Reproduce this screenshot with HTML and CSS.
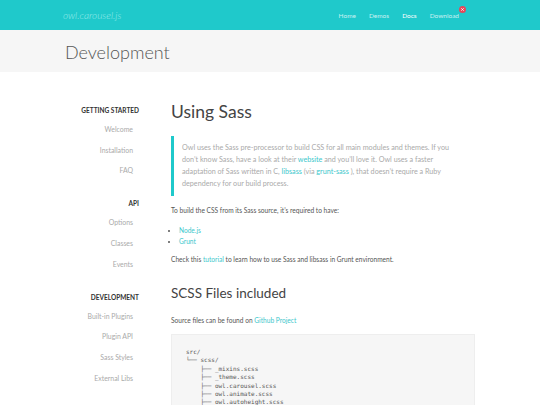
FILE: index.html
```html
<!DOCTYPE html>
<html>
<head>
<meta charset="utf-8">
<link rel="stylesheet" href="styles.css">
</head>
<body>
<header class="topbar">
  <div class="wrap topbar-inner">
    <a class="logo">owl.carousel.js</a>
    <nav class="nav">
      <a>Home</a>
      <a>Demos</a>
      <a class="active">Docs</a>
      <a class="dl">Download<span class="badge"><svg viewBox="0 0 10 10" width="7" height="7"><circle cx="5" cy="5" r="5" fill="#e64759"/><path d="M3.3 3.3 L6.7 6.7 M6.7 3.3 L3.3 6.7" stroke="#fff" stroke-width="1.2"/></svg></span></a>
    </nav>
  </div>
</header>
<section class="titlebar">
  <div class="wrap"><h1>Development</h1></div>
</section>
<div class="wrap layout">
  <aside class="side">
    <h4>GETTING STARTED</h4>
    <ul>
      <li>Welcome</li>
      <li>Installation</li>
      <li>FAQ</li>
    </ul>
    <h4>API</h4>
    <ul>
      <li>Options</li>
      <li>Classes</li>
      <li>Events</li>
    </ul>
    <h4>DEVELOPMENT</h4>
    <ul>
      <li>Built-in Plugins</li>
      <li>Plugin API</li>
      <li>Sass Styles</li>
      <li>External Libs</li>
    </ul>
  </aside>
  <main class="main">
    <h2>Using Sass</h2>
    <blockquote>Owl uses the Sass pre-processor to build CSS for all main modules and themes. If you don’t know Sass, have a look at their <a>website</a> and you’ll love it. Owl uses a faster adaptation of Sass written in C, <a>libsass</a> (via <a>grunt-sass</a> ), that doesn’t require a Ruby dependency for our build process.</blockquote>
    <p class="p1">To build the CSS from its Sass source, it’s required to have:</p>
    <ul class="bul">
      <li><a>Node.js</a></li>
      <li><a>Grunt</a></li>
    </ul>
    <p class="p2">Check this <a>tutorial</a> to learn how to use Sass and libsass in Grunt environment.</p>
    <h3>SCSS Files included</h3>
    <p class="p3">Source files can be found on <a>Github Project</a></p>
    <pre class="code">src/
└── scss/
    ├── _mixins.scss
    ├── _theme.scss
    ├── owl.carousel.scss
    ├── owl.animate.scss
    ├── owl.autoheight.scss</pre>
  </main>
</div>
</body>
</html>
```
FILE: styles.css
```css
html, body { margin: 0; padding: 0; }
body {
  font-family: Lato, "Open Sans", sans-serif;
  color: #444;
  background: #fff;
  overflow: hidden;
  height: 405px;
}
a { color: #3dc7cc; text-decoration: none; }
.wrap { margin-left: 63px; width: 412px; }
.topbar { background: #1fc9cb; height: 30px; }
.topbar-inner { display: flex; align-items: center; justify-content: space-between; height: 30px; }
.logo { color: #9ae9ea; font-style: italic; font-weight: 300; font-size: 10px; }
.nav { display: flex; gap: 13px; font-size: 6.5px; padding-right: 16px; }
.nav a { color: #c9f1f2; }
.nav a.active { color: #fff; }
.dl { position: relative; }
.badge { position: absolute; right: -7px; top: -6px; line-height: 0; }
.titlebar { background: #f6f6f6; height: 42px; }
.titlebar h1 { margin: 0; font-weight: 300; font-size: 18px; color: #555; padding: 9px 0 0 2px; line-height: 26px; }
.layout { display: grid; grid-template-columns: 76px 1fr; gap: 32px; padding-top: 34px; }
.side { text-align: right; }
.side h4 { margin: 0; font-size: 6.5px; font-weight: 700; color: #333; line-height: 10px; }
.side ul { list-style: none; margin: 9px 0 25px; padding: 0 6px 0 0; }
.side li { font-size: 6.9px; color: #aaa; line-height: 8px; margin-bottom: 12.7px; }
.main { margin-top: -5px; }
.main h2 { margin: 0; font-weight: 400; font-size: 17.5px; color: #444; line-height: 22px; }
blockquote { margin: 13px 0 0; border-left: 3px solid #1fc9cb; padding: 6px 12px 6px 8px; font-size: 7.2px; line-height: 12px; color: #aaa; font-weight: 400; }
.main p { font-size: 6.6px; color: #555; line-height: 10px; }
.p1 { margin: 9px 0 0; }
.bul { margin: 10px 0 0; padding-left: 8px; font-size: 6.6px; line-height: 11px; }
.bul li::marker { color: #555; }
.p2 { margin: 7px 0 0; }
.main h3 { margin: 20px 0 0; font-weight: 400; font-size: 13.5px; color: #444; line-height: 18px; }
.p3 { margin: 13px 0 0; }
.code { margin: 9px 0 0; background: #f6f6f6; border: 1px solid #eee; padding: 13px 14px; font-family: "DejaVu Sans Mono", monospace; font-size: 6px; line-height: 8.4px; color: #555; height: 100px; }
```
